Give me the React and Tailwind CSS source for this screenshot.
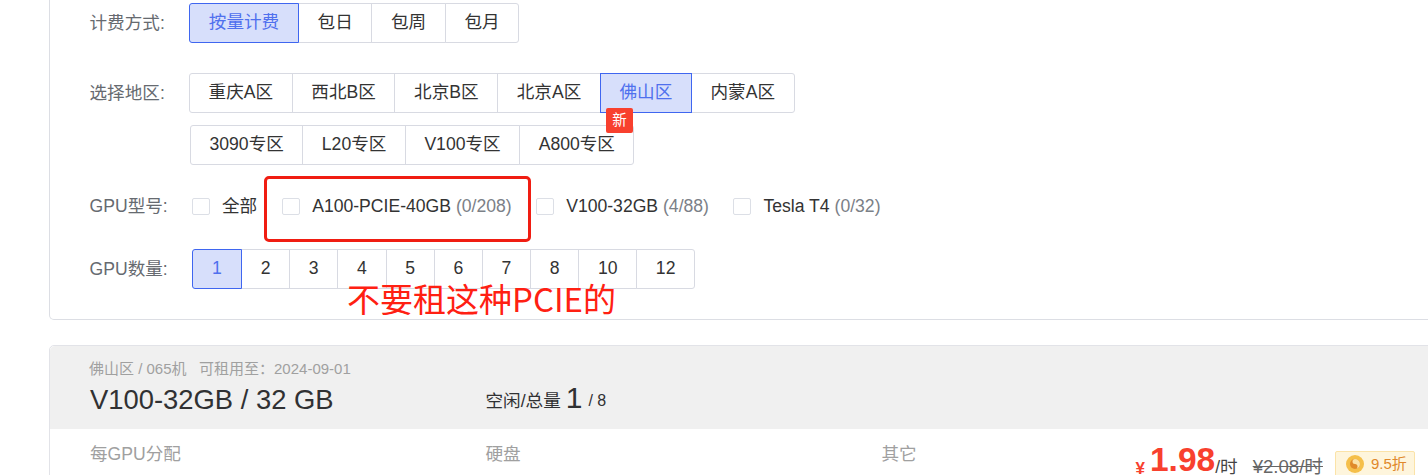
const font = { fontFamily: '"Liberation Sans","Noto Sans CJK SC",sans-serif' };

function Group({ items, active, badge, className = "", pad = "px-[18.6px]", firstClass = "" }) {
  return (
    <div className={`flex ${className}`}>
      {items.map((t, i) => {
        const on = t === active;
        return (
          <div
            key={t}
            className={`relative flex h-[39.5px] items-center justify-center border border-solid text-[17.6px] leading-none ${pad} ${i > 0 ? "-ml-px" : firstClass} ${i === 0 ? "rounded-l-[3px]" : ""} ${i === items.length - 1 ? "rounded-r-[3px]" : ""} ${on ? "z-10 border-[#3f66f0] bg-[#d7dffb] text-[#4f70ee]" : "border-[#d8dae2] bg-white text-[#333333]"}`}
          >
            {t}
            {badge === t && (
              <span className="absolute left-[5px] top-[34px] z-20 flex h-[25px] w-[27px] items-center justify-center rounded-[2px] bg-[#f8402e] text-[14.5px] text-white">
                新
              </span>
            )}
          </div>
        );
      })}
    </div>
  );
}

function Check({ label, count, className = "" }) {
  return (
    <div className={`flex items-center ${className}`}>
      <span className="h-[17.6px] w-[17.6px] rounded-[2px] border border-solid border-[#dcdfe6] bg-white" />
      <span className="ml-[12.4px] whitespace-nowrap text-[17.6px] leading-none text-[#333333]">
        {label}
        {count && <span className="text-[#7b8087]"> {count}</span>}
      </span>
    </div>
  );
}

function Label({ children, className = "w-[99.5px]" }) {
  return <div className={`shrink-0 whitespace-nowrap text-[17.6px] text-[#666a70] ${className}`}>{children}</div>;
}

export default function App() {
  return (
    <div className="relative h-[475px] w-[1428px] overflow-hidden bg-white" style={font}>
      <div className="ml-[49px] h-[320px] w-[1420px] rounded-b-[5px] border border-t-0 border-solid border-[#dcdee4] bg-white pl-[39.5px] pt-[3px]">
        <div className="flex items-center">
          <Label>计费方式:</Label>
          <Group items={["按量计费", "包日", "包周", "包月"]} active="按量计费" firstClass="w-[110px]" />
        </div>
        <div className="mt-[30.5px] flex items-center">
          <Label>选择地区:</Label>
          <Group items={["重庆A区", "西北B区", "北京B区", "北京A区", "佛山区", "内蒙A区"]} active="佛山区" badge="佛山区" />
        </div>
        <Group items={["3090专区", "L20专区", "V100专区", "A800专区"]} pad="px-[18.5px]" className="ml-[100.5px] mt-[12.5px]" />
        <div className="mt-[33px] flex h-[18px] items-center">
          <Label className="w-[102.5px]">GPU型号:</Label>
          <Check label="全部" />
          <Check label="A100-PCIE-40GB" count="(0/208)" className="ml-[25px]" />
          <Check label="V100-32GB" count="(4/88)" className="ml-[24.5px]" />
          <Check label="Tesla T4" count="(0/32)" className="ml-[24.5px]" />
        </div>
        <div className="mt-[33.5px] flex items-center">
          <Label className="w-[102.5px]">GPU数量:</Label>
          <Group items={["1", "2", "3", "4", "5", "6", "7", "8", "10", "12"]} active="1" pad="px-[18.7px]" firstClass="w-[50px]" />
        </div>
      </div>

      <div className="ml-[49px] mt-[25px] h-[160px] w-[1420px] rounded-t-[5px] border border-solid border-[#e2e3e8] bg-white">
        <div className="flex h-[83px] rounded-t-[5px] bg-[#f0f0f0] pl-[40px] pt-[15px]">
          <div className="w-[395.5px] shrink-0">
            <div className="-ml-px whitespace-nowrap text-[15px] leading-[16px] text-[#a0a0a0]">佛山区 / 065机&nbsp;&nbsp;&nbsp;可租用至：2024-09-01</div>
            <div className="mt-[7px] whitespace-nowrap text-[27.4px] leading-[32px] text-[#303133]">V100-32GB / 32 GB</div>
          </div>
          <div className="flex h-[53px] items-end whitespace-nowrap text-[#303133]">
            <span className="text-[17.6px] leading-[26px]">空闲/总量</span>
            <span className="ml-[5px] text-[30px] leading-[33px]">1</span>
            <span className="ml-[6px] text-[16px] leading-[26px]">/ 8</span>
          </div>
        </div>
        <div className="flex pl-[40px] pt-[14px] text-[17.6px] leading-[22px] text-[#a0a0a0]">
          <div className="w-[395.5px]">每GPU分配</div>
          <div className="w-[396px]">硬盘</div>
          <div className="w-[254px]">其它</div>
          <div className="flex items-end whitespace-nowrap leading-none">
            <span className="text-[17px] font-bold text-[#f8402e]">¥</span>
            <span className="ml-[5px] text-[33.5px] font-bold text-[#f8402e]">1.98</span>
            <span className="text-[17.6px] text-[#444444]">/时</span>
            <span className="ml-[15px] text-[18.6px] text-[#666666] line-through">¥2.08/时</span>
            <span className="ml-[12px] flex h-[26px] w-[80px] items-center rounded-[2px] border border-solid border-[#fbe3a8] bg-[#fef5dc] pl-[9px] text-[15px] text-[#e0882a]">
              <svg width="20" height="20" viewBox="0 0 20 20" className="shrink-0">
                <circle cx="10" cy="10" r="9" fill="#f5bf4a" />
                <circle cx="10" cy="10" r="5" fill="#e08a2a" />
                <path d="M10 5a5 5 0 0 1 0 10a2.5 2.5 0 0 0 0-5a2.5 2.5 0 0 1 0-5z" fill="#fbe3a8" />
              </svg>
              <span className="ml-[6px]">9.5折</span>
            </span>
          </div>
        </div>
      </div>

      <div className="absolute left-[264px] top-[176px] h-[66px] w-[267px] rounded-[5px] border-[3.5px] border-solid border-[#f01d12]" />
      <div
        className="absolute left-[347px] top-[275px] whitespace-nowrap text-[33px] leading-[46px] text-[#ff2012]"
        style={{ fontFamily: '"Noto Sans CJK SC",sans-serif' }}
      >
        不要租这种PCIE的
      </div>
    </div>
  );
}
